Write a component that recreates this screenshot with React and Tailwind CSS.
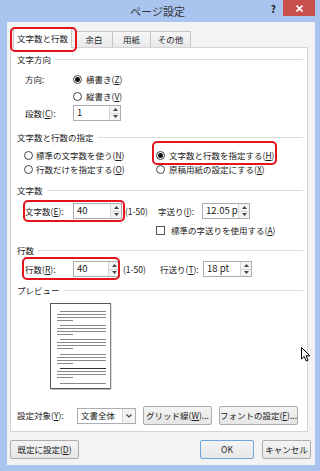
import React from 'react';

function Radio({ on }) {
  return (
    <span className="flex h-[9px] w-[9px] shrink-0 items-center justify-center rounded-full border border-[#444] bg-white">
      {on && <span className="h-[5px] w-[5px] rounded-full bg-[#111]" />}
    </span>
  );
}

function Header({ text }) {
  return (
    <div className="flex h-[14px] items-center pl-[6px] pr-[4px]">
      <span>{text}</span>
      <span className="ml-[4px] h-px flex-1 bg-[#dcdcdc]" />
    </div>
  );
}

function Spin({ value, w }) {
  return (
    <div className={`flex h-[16px] ${w} shrink-0 items-stretch border border-[#abadb3] bg-white`}>
      <span className="flex flex-1 items-center overflow-hidden pl-[3px] text-[9.5px] leading-none">{value}</span>
      <span className="flex w-[11px] flex-col border-l border-[#d5d5d5] bg-[#f4f4f4]">
        <span className="flex flex-1 items-center justify-center border-b border-[#d5d5d5]">
          <svg width="5" height="3" viewBox="0 0 5 3"><path d="M0 3 L2.5 0 L5 3 Z" fill="#444" /></svg>
        </span>
        <span className="flex flex-1 items-center justify-center">
          <svg width="5" height="3" viewBox="0 0 5 3"><path d="M0 0 L2.5 3 L5 0 Z" fill="#444" /></svg>
        </span>
      </span>
    </div>
  );
}

function Btn({ children, w, def }) {
  return (
    <div
      className={`flex h-[19px] ${w} items-center justify-center rounded-[2px] border ${
        def ? 'border-[#6ea6dc]' : 'border-[#acacac]'
      } bg-gradient-to-b from-[#f4f4f4] to-[#e6e6e6]`}
    >
      {children}
    </div>
  );
}

function Preview() {
  const groups = [8, 22, 36, 51, 65];
  return (
    <svg width="62" height="87" viewBox="0 0 62 87">
      <rect x="0.5" y="0.5" width="60" height="85" fill="#fff" stroke="#555" />
      <line x1="61" y1="2" x2="61" y2="86" stroke="#bbb" />
      <line x1="2" y1="86.5" x2="61" y2="86.5" stroke="#bbb" />
      {groups.map((y, i) => (
        <g key={y} strokeWidth="1">
          <line x1="10" y1={y + 0.5} x2="56" y2={y + 0.5} stroke={i === 4 ? '#333' : '#8a8a8a'} />
          <line x1="7" y1={y + 3.5} x2="56" y2={y + 3.5} stroke="#8a8a8a" />
          <line x1="7" y1={y + 6.5} x2="56" y2={y + 6.5} stroke="#8a8a8a" />
          <line x1="7" y1={y + 9.5} x2="23" y2={y + 9.5} stroke="#8a8a8a" />
        </g>
      ))}
      <line x1="10" y1="80.5" x2="56" y2="80.5" stroke="#8a8a8a" />
    </svg>
  );
}

export default function App() {
  return (
    <div className="relative flex h-[471px] w-[320px] flex-col overflow-hidden whitespace-nowrap bg-[#a9c4ef] font-['Noto_Sans_CJK_JP',sans-serif] text-[8.5px] text-[#1a1a1a]">
      {/* title bar */}
      <div className="flex h-[22px] items-start">
        <div className="flex-1" />
        <div className="pt-[4px] text-[11px] leading-[14px] text-[#333]">ページ設定</div>
        <div className="flex flex-1 items-start justify-end pr-[5px]">
          <span className="mr-[7px] pt-[3px] text-[10px] font-bold leading-[12px] text-[#222]">?</span>
          <span className="flex h-[16px] w-[32px] items-center justify-center bg-[#c9504c]">
            <svg width="7" height="7" viewBox="0 0 7 7">
              <path d="M0.5 0.5 L6.5 6.5 M6.5 0.5 L0.5 6.5" stroke="#fff" strokeWidth="1.6" />
            </svg>
          </span>
        </div>
      </div>

      {/* dialog body */}
      <div className="ml-[7px] flex h-[443px] w-[308px] flex-col bg-[#f3f3f3] pt-[6px]">
        {/* tabs */}
        <div className="flex h-[19px] items-end pl-[6px]">
          <div className="relative z-10 -mb-px flex h-[20px] w-[59px] items-center justify-center border border-b-0 border-[#c6c6c6] bg-white">
            文字数と行数
            <span className="absolute left-[-4px] top-[-2px] h-[25px] w-[67px] rounded-[5px] border-2 border-[#e3141b]" />
          </div>
          <div className="ml-[3px] flex h-[16px] w-[38px] items-center justify-center border border-b-0 border-[#c6c6c6] bg-gradient-to-b from-[#f6f6f6] to-[#e9e9e9]">
            余白
          </div>
          <div className="-ml-px flex h-[16px] w-[39px] items-center justify-center border border-b-0 border-[#c6c6c6] bg-gradient-to-b from-[#f6f6f6] to-[#e9e9e9]">
            用紙
          </div>
          <div className="-ml-px flex h-[16px] w-[41px] items-center justify-center border border-b-0 border-[#c6c6c6] bg-gradient-to-b from-[#f6f6f6] to-[#e9e9e9]">
            その他
          </div>
        </div>

        {/* tab page */}
        <div className="ml-[3px] mr-[7px] flex flex-col border border-[#d4d4d4] bg-white pb-[6px] pt-[4px]">
          <Header text="文字方向" />
          <div className="mt-[5px] flex h-[16px] items-center pl-[14px]">
            <span className="w-[48px]">方向:</span>
            <Radio on />
            <span className="ml-[4px]">横書き(<u>Z</u>)</span>
          </div>
          <div className="mt-[1px] flex h-[16px] items-center pl-[62px]">
            <Radio />
            <span className="ml-[4px]">縦書き(<u>V</u>)</span>
          </div>
          <div className="mt-[1px] flex h-[16px] items-center pl-[14px]">
            <span className="w-[48px]">段数(<u>C</u>):</span>
            <Spin value="1" w="w-[48px]" />
          </div>

          <div className="mt-[9px]">
            <Header text="文字数と行数の指定" />
          </div>
          <div className="mt-[4px] flex h-[14px] items-center pl-[13px]">
            <div className="flex w-[132px] items-center">
              <Radio />
              <span className="ml-[3px]">標準の文字数を使う(<u>N</u>)</span>
            </div>
            <div className="relative flex items-center">
              <Radio on />
              <span className="ml-[4px]">文字数と行数を指定する(<u>H</u>)</span>
              <span className="absolute left-[-4px] top-[-8px] h-[24px] w-[125px] rounded-[5px] border-2 border-[#e3141b]" />
            </div>
          </div>
          <div className="flex h-[14px] items-center pl-[13px]">
            <div className="flex w-[132px] items-center">
              <Radio />
              <span className="ml-[3px]">行数だけを指定する(<u>O</u>)</span>
            </div>
            <div className="flex items-center">
              <Radio />
              <span className="ml-[4px]">原稿用紙の設定にする(<u>X</u>)</span>
            </div>
          </div>

          <div className="mt-[7px]">
            <Header text="文字数" />
          </div>
          <div className="relative mt-[6px] flex h-[16px] items-center pl-[14px]">
            <div className="flex w-[133px] items-center">
              <span className="w-[48px]">文字数(<u>E</u>):</span>
              <Spin value="40" w="w-[49px]" />
              <span className="ml-[3px]">(1-50)</span>
            </div>
            <span className="w-[44px]">字送り(<u>I</u>):</span>
            <Spin value="12.05 p" w="w-[48px]" />
            <span className="absolute left-[12px] top-[-3px] h-[22px] w-[102px] rounded-[5px] border-2 border-[#e3141b]" />
          </div>
          <div className="mt-[4px] flex h-[14px] items-center pl-[145px]">
            <span className="h-[9px] w-[9px] border border-[#555] bg-white" />
            <span className="ml-[6px]">標準の字送りを使用する(<u>A</u>)</span>
          </div>

          <div className="mt-[6px]">
            <Header text="行数" />
          </div>
          <div className="relative mt-[4px] flex h-[16px] items-center pl-[14px]">
            <div className="flex w-[135px] items-center">
              <span className="w-[48px]">行数(<u>R</u>):</span>
              <Spin value="40" w="w-[47px]" />
              <span className="ml-[3px]">(1-50)</span>
            </div>
            <span className="w-[43px]">行送り(<u>T</u>):</span>
            <Spin value="18 pt" w="w-[49px]" />
            <span className="absolute left-[11px] top-[-4px] h-[23px] w-[98px] rounded-[5px] border-2 border-[#e3141b]" />
          </div>

          <div className="mt-[6px]">
            <Header text="プレビュー" />
          </div>
          <div className="mt-[6px] h-[87px] pl-[39px]">
            <Preview />
          </div>

          <div className="mt-[16px] flex h-[19px] items-center pl-[6px]">
            <span className="w-[60px]">設定対象(<u>Y</u>):</span>
            <div className="flex h-[16px] w-[59px] items-stretch border border-[#abadb3] bg-white">
              <span className="flex flex-1 items-center pl-[3px]">文書全体</span>
              <span className="flex w-[13px] items-center justify-center border-l border-[#d5d5d5] bg-[#f2f2f2]">
                <svg width="6" height="4" viewBox="0 0 6 4">
                  <path d="M0.5 0.5 L3 3 L5.5 0.5" fill="none" stroke="#444" strokeWidth="1.2" />
                </svg>
              </span>
            </div>
            <div className="ml-[7px]">
              <Btn w="w-[69px]">グリッド線(<u>W</u>)...</Btn>
            </div>
            <div className="ml-[7px]">
              <Btn w="w-[79px]">フォントの設定(<u>F</u>)...</Btn>
            </div>
          </div>
        </div>

        {/* dialog buttons */}
        <div className="mt-[8px] flex items-center pl-[3px]">
          <Btn w="w-[69px]">既定に設定(<u>D</u>)</Btn>
          <div className="flex-1" />
          <Btn w="w-[54px]" def>
            OK
          </Btn>
          <div className="ml-[8px] mr-[4px]">
            <Btn w="w-[49px]">キャンセル</Btn>
          </div>
        </div>
      </div>

      {/* mouse pointer */}
      <svg className="absolute left-[301px] top-[347px]" width="10" height="15" viewBox="0 0 10 15">
        <path d="M0.5 0.5 L0.5 12 L3.2 9.5 L5.2 14 L7 13.2 L5.1 8.8 L8.8 8.8 Z" fill="#fff" stroke="#000" strokeWidth="1" strokeLinejoin="round" />
      </svg>
    </div>
  );
}
